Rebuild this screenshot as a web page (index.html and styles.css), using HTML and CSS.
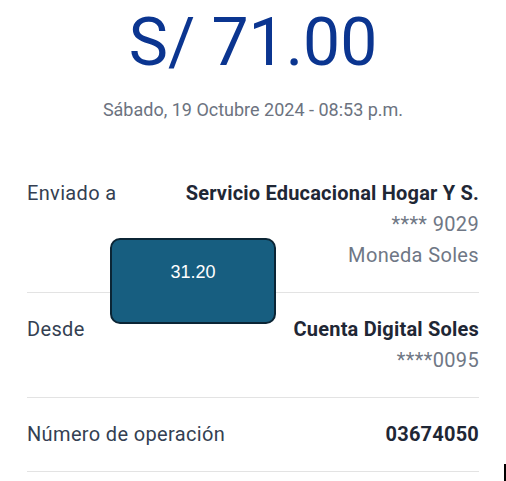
FILE: index.html
```html
<!DOCTYPE html>
<html lang="es">
<head>
<meta charset="utf-8">
<link rel="stylesheet" href="styles.css">
</head>
<body>
<div class="page">
  <header class="head">
    <div class="amount">S/ 71.00</div>
    <div class="date">Sábado, 19 Octubre 2024 - 08:53 p.m.</div>
  </header>
  <section class="row">
    <div class="label">Enviado a</div>
    <div class="vals">
      <div class="strong">Servicio Educacional Hogar Y S.</div>
      <div class="muted">**** 9029</div>
      <div class="muted">Moneda Soles</div>
    </div>
  </section>
  <section class="row">
    <div class="label">Desde</div>
    <div class="vals">
      <div class="strong">Cuenta Digital Soles</div>
      <div class="muted">****0095</div>
    </div>
  </section>
  <section class="row">
    <div class="label">Número de operación</div>
    <div class="vals">
      <div class="strong">03674050</div>
    </div>
  </section>
  <div class="bubble">31.20</div>
  <div class="caret"></div>
</div>
</body>
</html>
```
FILE: styles.css
```css
html, body {
  margin: 0;
  padding: 0;
  background: #ffffff;
}
.page {
  position: relative;
  width: 506px;
  height: 481px;
  overflow: hidden;
  font-family: Roboto, "Noto Sans", sans-serif;
  padding: 0 27px;
  box-sizing: border-box;
}
.head {
  display: flex;
  flex-direction: column;
  align-items: center;
  height: 157px;
}
.amount {
  font-size: 66px;
  line-height: 80px;
  color: #0b3590;
  font-weight: 400;
  margin-top: 3px;
}
.date {
  font-size: 18px;
  line-height: 24px;
  color: #6c7380;
  margin-top: 15px;
}
.row {
  display: flex;
  justify-content: space-between;
  padding: 21px 0;
  border-bottom: 1px solid #e3e3e3;
  font-size: 20px;
  line-height: 31px;
  letter-spacing: 0.35px;
}
.label {
  color: #343f52;
}
.vals {
  text-align: right;
}
.strong {
  font-weight: 700;
  color: #1f2735;
  letter-spacing: 0.2px;
}
.muted {
  color: #6f7785;
}
.bubble {
  position: absolute;
  left: 110px;
  top: 238px;
  width: 166px;
  height: 86px;
  box-sizing: border-box;
  border: 2px solid #0b2535;
  border-radius: 10px;
  background: #175e80;
  color: #ffffff;
  font-family: "Liberation Sans", Arial, sans-serif;
  font-size: 18px;
  text-align: center;
  padding-top: 21px;
  line-height: 22px;
}
.caret {
  position: absolute;
  left: 504px;
  top: 464px;
  width: 2px;
  height: 17px;
  background: #000000;
}
```
